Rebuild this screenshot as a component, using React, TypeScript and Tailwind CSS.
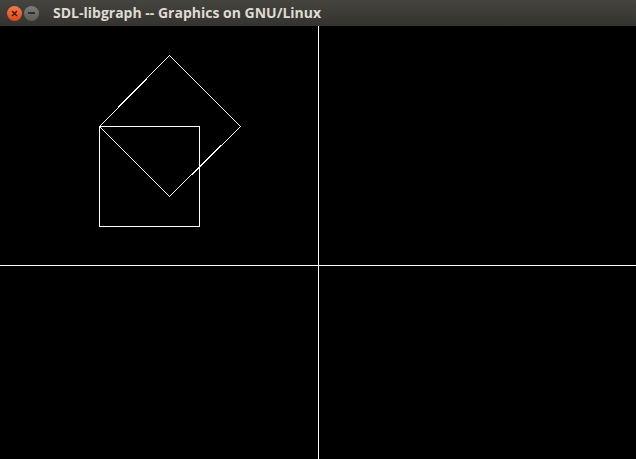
export default function App() {
  return (
    <div className="w-[636px] h-[459px] flex flex-col bg-black overflow-hidden">
      {/* Title bar */}
      <div className="h-[26px] shrink-0 flex items-center bg-gradient-to-b from-[#45443f] to-[#34332f] pl-[7px]">
        <div className="w-[15px] h-[15px] rounded-full bg-gradient-to-b from-[#f57a4c] to-[#dd4815] flex items-center justify-center">
          <svg width="7" height="7" viewBox="0 0 7 7">
            <path d="M1 1L6 6M6 1L1 6" stroke="#3c1a0c" strokeWidth="1.4" />
          </svg>
        </div>
        <div className="ml-[2px] w-[15px] h-[15px] rounded-full bg-gradient-to-b from-[#7d7c78] to-[#5c5b57] flex items-center justify-center">
          <div className="w-[7px] h-[1.5px] bg-[#2f2e2b]" />
        </div>
        <span className="ml-[14px] text-[14px] font-bold text-[#dfdbd2] font-['Open_Sans','DejaVu_Sans',sans-serif] leading-none">
          SDL-libgraph -- Graphics on GNU/Linux
        </span>
      </div>

      {/* Canvas */}
      <svg width="636" height="433" viewBox="0 0 636 433" className="block" shapeRendering="crispEdges">
        <rect x="0" y="0" width="636" height="433" fill="#000" />
        <line x1="318.5" y1="0" x2="318.5" y2="433" stroke="#fff" strokeWidth="1" />
        <line x1="0" y1="239.5" x2="636" y2="239.5" stroke="#fff" strokeWidth="1" />
        <rect x="99.5" y="100.5" width="100" height="100" fill="none" stroke="#fff" strokeWidth="1" />
        <polygon
          points="99.5,100.5 169.5,29.5 240.5,100.5 169.5,170.5"
          fill="none"
          stroke="#fff"
          strokeWidth="1"
        />
      </svg>
    </div>
  )
}
